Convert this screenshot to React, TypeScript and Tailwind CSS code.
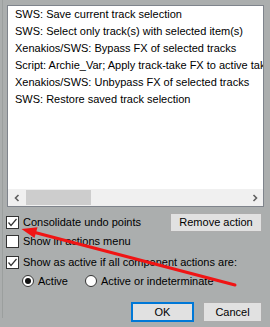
import React from "react";

const items = [
  "SWS: Save current track selection",
  "SWS: Select only track(s) with selected item(s)",
  "Xenakios/SWS: Bypass FX of selected tracks",
  "Script: Archie_Var; Apply track-take FX to active take",
  "Xenakios/SWS: Unbypass FX of selected tracks",
  "SWS: Restore saved track selection",
];

function Check({ checked }: { checked: boolean }) {
  return (
    <div className="w-[13px] h-[13px] shrink-0 border border-[#333333] bg-white flex items-center justify-center">
      {checked && (
        <svg width="11" height="11" viewBox="0 0 11 11">
          <polyline points="1.5,5.5 4,8.5 9.5,2" fill="none" stroke="#333333" strokeWidth="1.2" />
        </svg>
      )}
    </div>
  );
}

function Radio({ checked }: { checked: boolean }) {
  return (
    <div className="w-[12px] h-[12px] shrink-0 rounded-full border border-[#333333] bg-white flex items-center justify-center">
      {checked && <div className="w-[6px] h-[6px] rounded-full bg-[#111111]" />}
    </div>
  );
}

export default function App() {
  return (
    <div className="relative w-[270px] h-[327px] overflow-hidden bg-[#abaeae] flex text-[11px] text-black font-['Liberation_Sans',Arial,sans-serif]">
      <div className="w-[2px] shrink-0" />
      <div className="w-px h-[318px] shrink-0 bg-[#9b9f9e]" />
      <div className="flex-1 flex flex-col">
        <div className="ml-[4px] mt-[5px] w-[257px] h-[202px] border border-[#7f848c] bg-white flex flex-col">
          <div className="flex-1 overflow-hidden pl-[7px]">
            {items.map((t) => (
              <div key={t} className="h-[17px] leading-[17px] whitespace-nowrap">
                {t}
              </div>
            ))}
          </div>
          <div className="h-[17px] bg-[#f0f0f0] flex items-stretch">
            <div className="w-[18px] flex items-center justify-center">
              <svg width="8" height="8" viewBox="0 0 8 8">
                <polyline points="5.5,1 2.5,4 5.5,7" fill="none" stroke="#606060" strokeWidth="1.6" />
              </svg>
            </div>
            <div className="w-[65px] my-px bg-[#cdcdcd]" />
            <div className="flex-1" />
            <div className="w-[17px] flex items-center justify-center">
              <svg width="8" height="8" viewBox="0 0 8 8">
                <polyline points="2.5,1 5.5,4 2.5,7" fill="none" stroke="#606060" strokeWidth="1.6" />
              </svg>
            </div>
          </div>
        </div>

        <div className="mt-[6px] h-[19px] flex items-center">
          <div className="ml-[3px]">
            <Check checked />
          </div>
          <span className="ml-[4px]">Consolidate undo points</span>
          <button className="ml-auto mr-[8px] w-[92px] h-[19px] bg-[#e1e1e1] border border-[#adadad] flex items-center justify-center">
            Remove action
          </button>
        </div>

        <div className="mt-[3px] h-[13px] flex items-center">
          <div className="ml-[3px]">
            <Check checked={false} />
          </div>
          <span className="ml-[4px]">Show in actions menu</span>
        </div>

        <div className="mt-[8px] h-[13px] flex items-center">
          <div className="ml-[3px]">
            <Check checked />
          </div>
          <span className="ml-[4px]">Show as active if all component actions are:</span>
        </div>

        <div className="mt-[6px] h-[12px] flex items-center">
          <div className="ml-[19px] w-[63px] flex items-center">
            <Radio checked />
            <span className="ml-[4px]">Active</span>
          </div>
          <Radio checked={false} />
          <span className="ml-[4px]">Active or indeterminate</span>
        </div>

        <div className="mt-[15px] h-[20px] flex justify-end mr-[8px] gap-[9px]">
          <button className="w-[63px] h-[20px] bg-[#e1e1e1] border-2 border-[#0078d7] flex items-center justify-center">
            OK
          </button>
          <button className="w-[59px] h-[20px] bg-[#e1e1e1] border border-[#adadad] flex items-center justify-center">
            Cancel
          </button>
        </div>
      </div>

      <svg className="absolute inset-0 pointer-events-none" width="270" height="327" viewBox="0 0 270 327">
        <line x1="235" y1="285" x2="33" y2="232" stroke="#f01414" strokeWidth="3" strokeLinecap="round" />
        <polygon points="21.5,229 37.5,227.2 34.5,238" fill="#f01414" />
      </svg>
    </div>
  );
}
